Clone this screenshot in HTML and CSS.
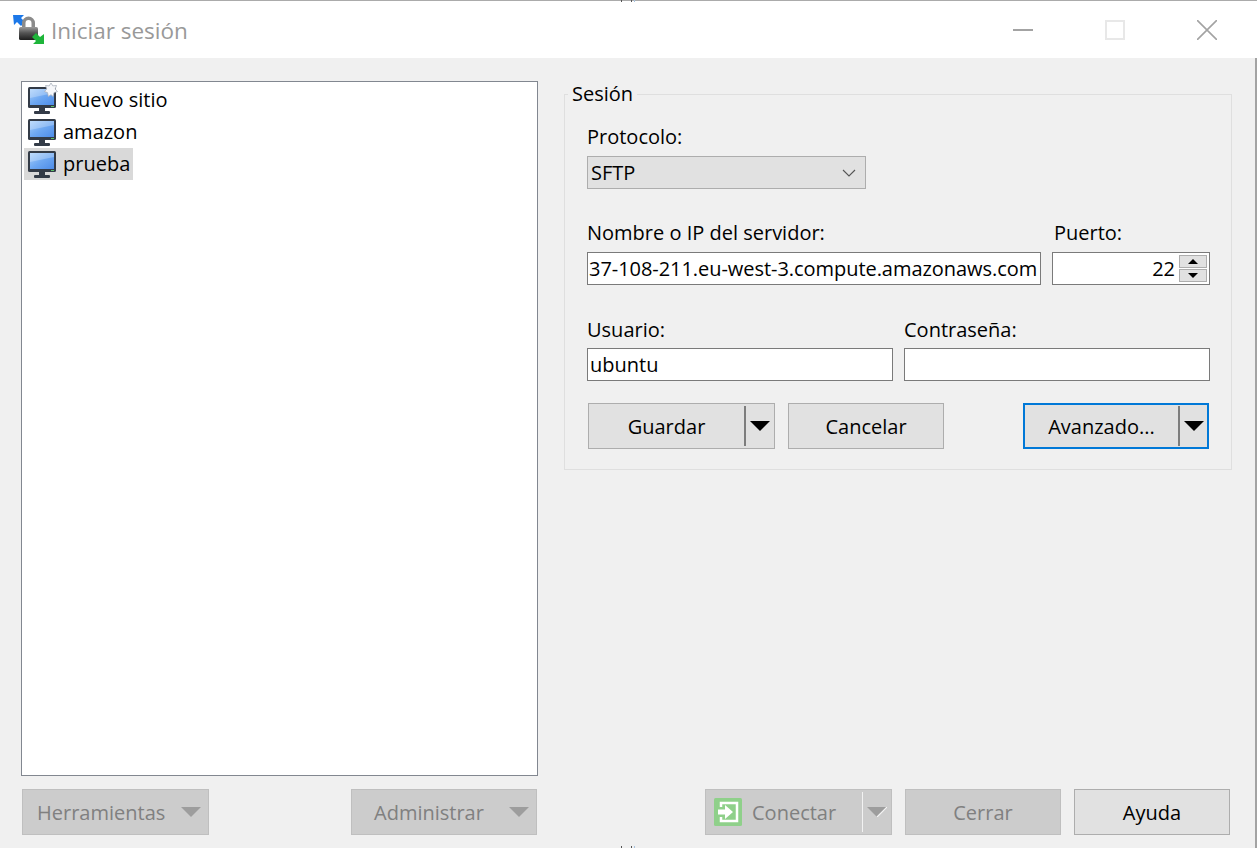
FILE: index.html
```html
<!DOCTYPE html>
<html lang="es">
<head>
    <meta charset="UTF-8">
    <title>Iniciar sesión</title>
    <link rel="stylesheet" href="styles.css">
</head>
<body>

<svg class="defs" width="0" height="0" aria-hidden="true">
    <defs>
        <linearGradient id="screenFill" x1="0" y1="0" x2="1" y2="1">
            <stop offset="0" stop-color="#a9d0fb"/>
            <stop offset="0.5" stop-color="#6ea8f2"/>
            <stop offset="1" stop-color="#4d8ce8"/>
        </linearGradient>
        <linearGradient id="lockFill" x1="0" y1="0" x2="0" y2="1">
            <stop offset="0" stop-color="#9a9a9a"/>
            <stop offset="0.45" stop-color="#555"/>
            <stop offset="1" stop-color="#1e1e1e"/>
        </linearGradient>
        <symbol id="monitor" viewBox="0 0 28 28">
            <rect x="0" y="1" width="28" height="21" rx="1.5" fill="#333b47"/>
            <rect x="2" y="3" width="24" height="16" fill="url(#screenFill)"/>
            <path d="M2 3h24v4L2 12z" fill="#fff" opacity="0.25"/>
            <rect x="23" y="20" width="3" height="1" fill="#5fc36a"/>
            <rect x="11" y="22" width="6" height="3" fill="#333b47"/>
            <rect x="6" y="25" width="16" height="3" rx="1" fill="#333b47"/>
        </symbol>
    </defs>
</svg>

<!-- resize marks on the window edge -->
<span class="mark mark-top mark-a"></span>
<span class="mark mark-top mark-b"></span>
<span class="mark mark-top mark-c"></span>
<span class="mark mark-bottom mark-a"></span>
<span class="mark mark-bottom mark-b"></span>
<span class="mark mark-bottom mark-c"></span>

<header class="titlebar">
    <div class="title-left">
        <svg class="app-icon" viewBox="0 0 32 32">
            <path d="M0 1h11L8 4l4 4-4 4-4-4-3 3z" fill="#1c78e8"/>
            <path d="M9 15V9a6.500 6.500 0 0 1 13 0v6h-3.500V9a3 3 0 0 0-6 0v6z" fill="#8b8b8b"/>
            <rect x="6" y="13" width="19" height="13" rx="1.500" fill="url(#lockFill)"/>
            <path d="M31 30H20l3-3-4-4 4-4 4 4 4-3z" fill="#1eb53a"/>
        </svg>
        <span class="title-text">Iniciar sesión</span>
    </div>
    <div class="window-controls">
        <svg class="win-btn" viewBox="0 0 20 20"><path d="M0 10h20" stroke="#a3a3a3" stroke-width="2"/></svg>
        <svg class="win-btn" viewBox="0 0 20 20"><rect x="1" y="1" width="18" height="18" fill="none" stroke="#e8e8e8" stroke-width="2"/></svg>
        <svg class="win-btn" viewBox="0 0 20 20"><path d="M0 0l20 20M20 0L0 20" stroke="#a3a3a3" stroke-width="1.600"/></svg>
    </div>
</header>

<main class="content">
    <section class="left-col">
        <ul class="site-tree">
            <li class="site">
                <span class="site-icon">
                    <svg class="monitor" viewBox="0 0 28 28"><use href="#monitor"/></svg>
                    <svg class="star" viewBox="0 0 14 14"><path d="M7 0l1.800 2.900 3.700-.4-1.300 3.500 2.300 2.600-3.500 1L9 13.500l-2-1.800-2.700 1.800-.8-3.900L.5 8.500 2.800 6 1.500 2.500l3.700.4z" fill="#f6f7fa" stroke="#a9b1bc" stroke-width="0.800"/></svg>
                </span>
                Nuevo sitio
            </li>
            <li class="site">
                <span class="site-icon"><svg class="monitor" viewBox="0 0 28 28"><use href="#monitor"/></svg></span>
                amazon
            </li>
            <li class="site site-selected">
                <span class="site-icon"><svg class="monitor" viewBox="0 0 28 28"><use href="#monitor"/></svg></span>
                prueba
            </li>
        </ul>
        <div class="left-buttons">
            <button class="btn btn-disabled btn-tool" type="button">
                <span class="tool-label">Herramientas</span><span class="arrow arrow-grey"></span>
            </button>
            <button class="btn btn-disabled btn-tool btn-admin" type="button">
                <span class="tool-label">Administrar</span><span class="arrow arrow-grey"></span>
            </button>
        </div>
    </section>

    <section class="right-col">
        <fieldset class="session">
            <legend>Sesión</legend>

            <label class="field-label">Protocolo:</label>
            <div class="select-box">
                <span>SFTP</span>
                <svg class="chevron" viewBox="0 0 14 8"><path d="M1 1l6 6 6-6" fill="none" stroke="#555" stroke-width="1.100"/></svg>
            </div>

            <div class="field-row row-server">
                <div class="field field-host">
                    <label class="field-label">Nombre o IP del servidor:</label>
                    <div class="text-box host-box">37-108-211.eu-west-3.compute.amazonaws.com</div>
                </div>
                <div class="field field-port">
                    <label class="field-label">Puerto:</label>
                    <div class="text-box port-box">
                        <span class="port-value">22</span>
                        <div class="spinner">
                            <span class="spin"><i class="tri tri-up"></i></span>
                            <span class="spin"><i class="tri tri-down"></i></span>
                        </div>
                    </div>
                </div>
            </div>

            <div class="field-row row-user">
                <div class="field field-half">
                    <label class="field-label">Usuario:</label>
                    <div class="text-box">ubuntu</div>
                </div>
                <div class="field field-half">
                    <label class="field-label">Contraseña:</label>
                    <div class="text-box"></div>
                </div>
            </div>

            <div class="session-buttons">
                <button class="btn btn-split btn-save" type="button">
                    <span class="split-label">Guardar</span><span class="split-sep"></span><span class="arrow"></span>
                </button>
                <button class="btn btn-cancel" type="button">Cancelar</button>
                <button class="btn btn-split btn-advanced" type="button">
                    <span class="split-label">Avanzado...</span><span class="split-sep"></span><span class="arrow"></span>
                </button>
            </div>
        </fieldset>

        <div class="dialog-buttons">
            <button class="btn btn-disabled btn-split btn-connect" type="button">
                <svg class="connect-icon" viewBox="0 0 28 28">
                    <rect width="28" height="28" rx="1.500" fill="#8fd08a"/>
                    <path d="M7 9V5h16v18H7v-4" fill="none" stroke="#fff" stroke-width="2.500"/>
                    <path d="M4 11.500h7V7l8 7-8 7v-4.500H4z" fill="#fff"/>
                </svg>
                <span class="split-label connect-label">Conectar</span><span class="split-sep split-sep-light"></span>
                <svg class="connect-arrow" viewBox="0 0 20 10"><path d="M0 0h20L10 10z" fill="#9d9d9d"/><path d="M10 10L20 0" stroke="#f4f4f4" stroke-width="1.200"/></svg>
            </button>
            <button class="btn btn-disabled btn-close" type="button">Cerrar</button>
            <button class="btn btn-help" type="button">Ayuda</button>
        </div>
    </section>
</main>

</body>
</html>
```

FILE: styles.css
```css
* {
    box-sizing: border-box;
}
html,
body {
    height: 100%;
}
body {
    margin: 0;
    overflow: hidden;
    display: flex;
    flex-direction: column;
    background-color: #f0f0f0;
    color: #000;
    font-family: "Open Sans", "Noto Sans", sans-serif;
    font-size: 20px;
}
.defs {
    position: absolute;
}
.mark {
    position: absolute;
    width: 1px;
    height: 2px;
    background-color: #555;
}
.mark-top {
    top: 0;
}
.mark-bottom {
    bottom: 0;
}
.mark-a {
    left: 621px;
}
.mark-b {
    left: 631px;
}
.mark-c {
    left: 634px;
    background-color: #a8c4e0;
}
.titlebar {
    height: 58px;
    flex: none;
    display: flex;
    justify-content: space-between;
    align-items: center;
    background-color: #fff;
    border-top: 1px solid #ababab;
}
.title-left {
    display: flex;
    align-items: center;
    padding-left: 13px;
}
.app-icon {
    width: 32px;
    height: 32px;
    margin-right: 6px;
}
.title-text {
    padding-top: 2px;
    color: #999;
    font-size: 22.5px;
}
.window-controls {
    display: flex;
    gap: 72px;
    padding-right: 40px;
}
.win-btn {
    width: 20px;
    height: 20px;
}
.content {
    flex: 1;
    display: flex;
    gap: 26px;
    padding: 23px 26px 13px 21px;
    border-right: 2px solid #a3a3a3;
}
.left-col {
    width: 517px;
    flex: none;
    display: flex;
    flex-direction: column;
}
.site-tree {
    height: 695px;
    margin: 0 0 13px;
    padding: 2px;
    list-style: none;
    background-color: #fff;
    border: 1px solid #828790;
}
.site {
    width: fit-content;
    height: 32px;
    display: flex;
    align-items: center;
    padding-right: 3px;
    line-height: 32px;
}
.site-selected {
    background-color: #d9d9d9;
}
.site-icon {
    position: relative;
    width: 28px;
    height: 28px;
    margin: 0 7px 0 4px;
}
.monitor {
    display: block;
    width: 28px;
    height: 28px;
}
.star {
    position: absolute;
    top: -3px;
    right: -2px;
    width: 14px;
    height: 14px;
}
.left-buttons {
    display: flex;
    justify-content: space-between;
    padding: 0 1px;
}
.btn {
    height: 46px;
    padding: 0;
    display: flex;
    align-items: center;
    justify-content: center;
    background-color: #e1e1e1;
    border: 1px solid #adadad;
    color: #000;
    font-family: inherit;
    font-size: 20px;
}
.btn-disabled {
    background-color: #ccc;
    border-color: #bfbfbf;
    color: #808080;
}
.btn-tool {
    width: 187px;
    justify-content: space-between;
    padding: 0 7px 0 14px;
}
.btn-admin {
    width: 186px;
    padding-left: 22px;
}
.arrow {
    width: 0;
    height: 0;
    border-left: 10px solid transparent;
    border-right: 10px solid transparent;
    border-top: 10px solid #000;
}
.arrow-grey {
    border-top-color: #9d9d9d;
}
.right-col {
    flex: 1;
    display: flex;
    flex-direction: column;
}
.session {
    height: 389px;
    margin: 0;
    padding: 16px 21px 0 22px;
    border: 1px solid #dfdfdf;
    min-width: 0;
}
.session legend {
    margin-left: -19px;
    padding: 0 4px;
    line-height: 26px;
    font-size: 20px;
}
.field-label {
    display: block;
    line-height: 28px;
    white-space: nowrap;
}
.select-box {
    width: 279px;
    height: 33px;
    margin-top: 5px;
    padding: 0 9px 0 3px;
    display: flex;
    align-items: center;
    justify-content: space-between;
    background-color: #e1e1e1;
    border: 1px solid #adadad;
}
.chevron {
    width: 14px;
    height: 8px;
}
.field-row {
    display: flex;
    gap: 11px;
}
.row-server {
    margin-top: 30px;
}
.row-server .text-box {
    margin-top: 5px;
}
.row-user {
    margin-top: 31px;
}
.row-user .text-box {
    margin-top: 4px;
}
.field-host {
    width: 454px;
}
.field-port {
    width: 158px;
}
.field-port .field-label {
    padding-left: 2px;
}
.field-half {
    width: 306px;
}
.text-box {
    height: 33px;
    padding: 0 2px;
    display: flex;
    align-items: center;
    background-color: #fff;
    border: 1px solid #7a7a7a;
    white-space: nowrap;
}
.host-box {
    padding-left: 1px;
    letter-spacing: -0.05px;
}
.port-box {
    justify-content: flex-end;
    padding-right: 2px;
}
.port-value {
    margin-right: 4px;
}
.spinner {
    width: 28px;
    display: flex;
    flex-direction: column;
    gap: 1px;
}
.spin {
    height: 13px;
    display: flex;
    align-items: center;
    justify-content: center;
    background-color: #e1e1e1;
    border: 1px solid #adadad;
}
.tri {
    width: 0;
    height: 0;
    border-left: 5px solid transparent;
    border-right: 5px solid transparent;
}
.tri-up {
    border-bottom: 5px solid #000;
}
.tri-down {
    border-top: 5px solid #000;
}
.session-buttons {
    margin-top: 22px;
    padding-left: 1px;
    display: flex;
}
.btn-split {
    justify-content: flex-start;
}
.split-label {
    flex: 1;
    text-align: center;
}
.split-sep {
    width: 2px;
    height: 40px;
    background-color: #7d7d7d;
}
.split-sep-light {
    background-color: #f2f2f2;
    width: 1px;
}
.btn-split .arrow {
    margin: 0 4px;
}
.btn-save {
    width: 187px;
}
.btn-cancel {
    width: 156px;
    margin-left: 13px;
}
.btn-advanced {
    width: 186px;
    margin-left: 79px;
    border: 2px solid #0078d7;
}
.btn-advanced .arrow {
    margin: 0 3px 0 4px;
}
.dialog-buttons {
    margin-top: auto;
    display: flex;
    gap: 13px;
    justify-content: flex-end;
    padding-right: 2px;
}
.btn-connect {
    width: 187px;
    padding-left: 8px;
}
.connect-icon {
    width: 28px;
    height: 28px;
    flex: none;
}
.connect-label {
    padding-left: 10px;
    text-align: left;
}
.connect-arrow {
    width: 20px;
    height: 10px;
    margin: 0 4px;
    flex: none;
}
.btn-close,
.btn-help {
    width: 156px;
}
```
